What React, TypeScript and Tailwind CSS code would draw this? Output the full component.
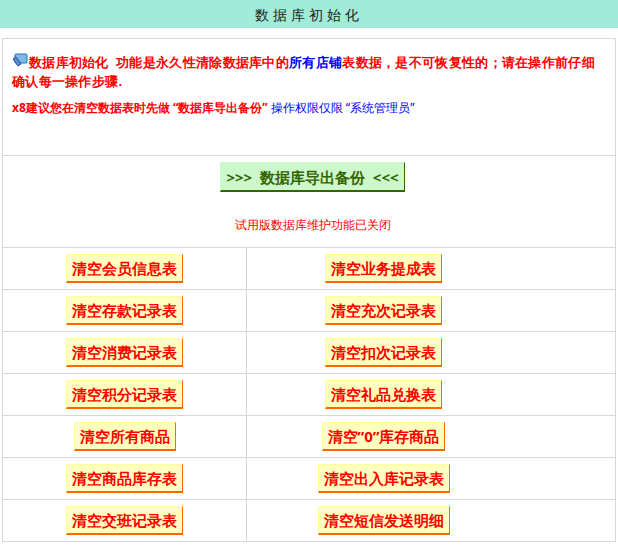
import React from "react";

const Btn = ({ t }: { t: string }) => (
  <div className="inline-block bg-[#ffffc0] border border-[#ffff99] border-r-[#ff6600] border-b-[#ff6600] border-b-2 px-[5px] h-[29px] leading-[27px] text-[15px] font-bold text-[#ff0000] whitespace-nowrap">
    {t}
  </div>
);

const rows: [string, string][] = [
  ["清空会员信息表", "清空业务提成表"],
  ["清空存款记录表", "清空充次记录表"],
  ["清空消费记录表", "清空扣次记录表"],
  ["清空积分记录表", "清空礼品兑换表"],
  ["清空所有商品", "清空”0”库存商品"],
  ["清空商品库存表", "清空出入库记录表"],
  ["清空交班记录表", "清空短信发送明细"],
];

export default function App() {
  return (
    <div className="w-[618px] h-[545px] bg-white font-['SimSun','Noto_Sans_CJK_SC',sans-serif]">
      <div className="h-[28px] bg-[#a0ecd8] flex items-center justify-center text-[14px] tracking-[4px] text-[#222]">
        数据库初始化
      </div>
      <div className="mt-[10px] mx-[2px] border border-[#d8d8d8] border-b-0">
        <div className="h-[117px] border-b border-[#d8d8d8] pl-[9px] pr-[12px] pt-[14px] text-[13px] font-bold text-[#ff0000] tracking-[0.3px]">
          <div className="leading-[19px]">
            <svg width="16" height="16" viewBox="0 0 16 16" className="inline-block align-[-2px] mr-[1px]">
              <rect x="3" y="1" width="12" height="9" rx="1" fill="#7fb8e8" stroke="#2a6cb8" />
              <path d="M1 6 L6 13 L9 11 L4 4 Z" fill="#5a8fd0" stroke="#1f4f9a" />
            </svg>
            数据库初始化&nbsp; 功能是永久性清除数据库中的<span className="text-[#0000ff]">所有店铺</span>表数据，是不可恢复性的；请在操作前仔细确认每一操作步骤.
          </div>
          <div className="mt-[8px] text-[12px] tracking-normal">
            x8建议您在清空数据表时先做 “数据库导出备份” <span className="font-normal text-[#0000ff]">操作权限仅限 “系统管理员”</span>
          </div>
        </div>
        <div className="h-[92px] border-b border-[#d8d8d8] flex flex-col items-center pt-[6px]">
          <div className="bg-[#ccf8cc] border border-[#ccf8cc] border-r-[#336600] border-b-[#336600] border-b-2 h-[30px] leading-[28px] px-[5px] ml-[7px] text-[15px] font-bold text-[#336600] whitespace-nowrap">
            {">>>"}&nbsp; 数据库导出备份&nbsp; {"<<<"}
          </div>
          <div className="mt-[24px] text-[12px] text-[#ff0000] ml-[7px]">试用版数据库维护功能已关闭</div>
        </div>
        {rows.map(([a, b], i) => (
          <div key={i} className="grid grid-cols-[244px_1fr] h-[42px] border-b border-[#d8d8d8]">
            <div className="flex items-center justify-center border-r border-[#d8d8d8]">
              <Btn t={a} />
            </div>
            <div className="flex items-center justify-center pr-[95px]">
              <Btn t={b} />
            </div>
          </div>
        ))}
      </div>
    </div>
  );
}
